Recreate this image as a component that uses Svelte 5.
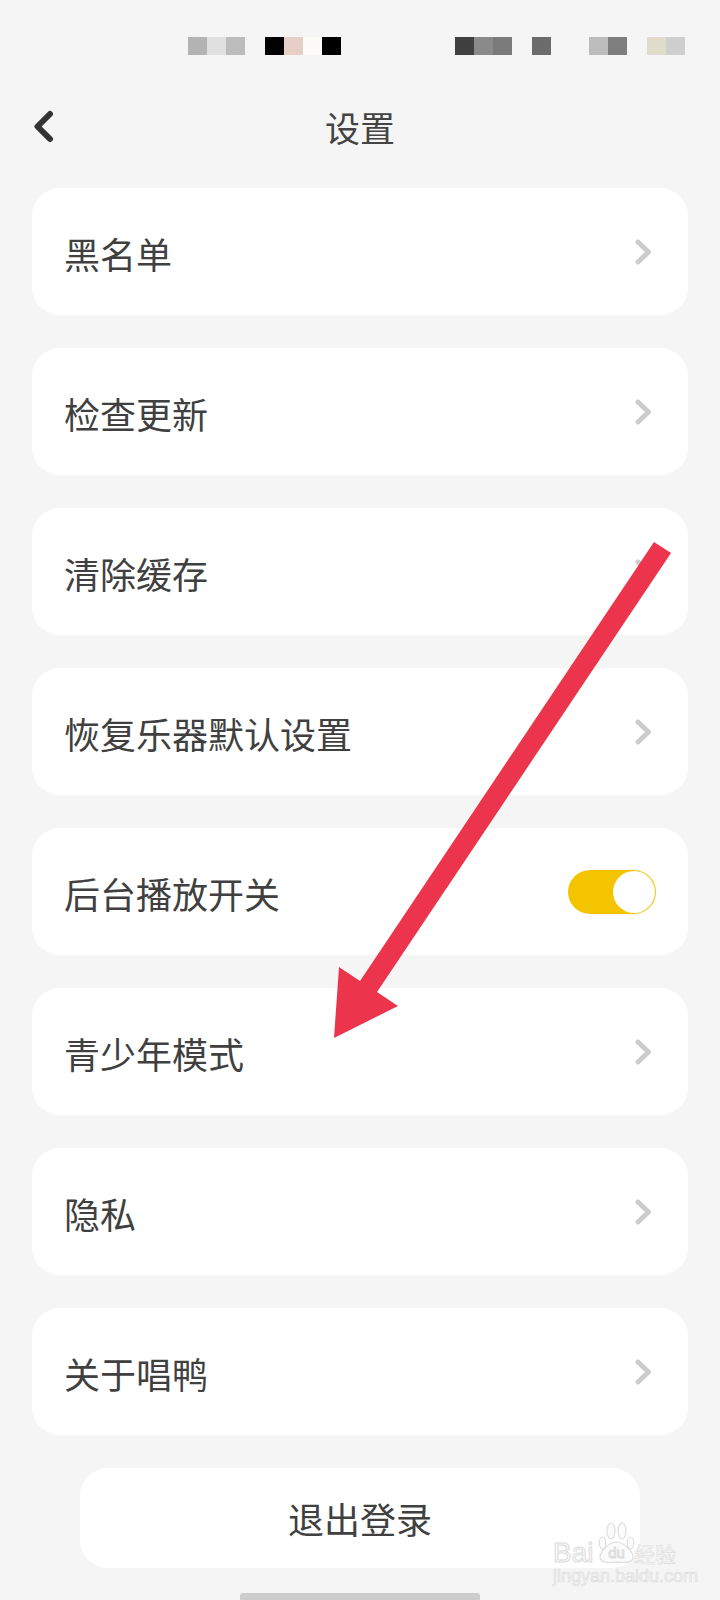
<script>
  const rows = [
    { label: '黑名单' },
    { label: '检查更新' },
    { label: '清除缓存' },
    { label: '恢复乐器默认设置' },
    { label: '后台播放开关', toggle: true },
    { label: '青少年模式' },
    { label: '隐私' },
    { label: '关于唱鸭' }
  ];

  // mosaic over the status bar, grouped as in the screenshot
  const leftGroups = [
    ['#b3b3b3', '#e0e0e0', '#bcbcbc'],
    ['#000000', '#e6cfc6', '#fdfbf8', '#000000']
  ];
  const rightGroups = [
    ['#404040', '#8a8a8a', '#7a7a7a'],
    ['#6c6c6c'],
    ['#bcbcbc', '#7e7e7e'],
    ['#e0dccb', '#cfcfcf']
  ];
</script>

<div class="page">
  <div class="status">
    <div class="status-side left">
      {#each leftGroups as group}
        <div class="blocks">
          {#each group as c}<span style="background:{c}"></span>{/each}
        </div>
      {/each}
    </div>
    <div class="status-side right">
      {#each rightGroups as group}
        <div class="blocks">
          {#each group as c}<span style="background:{c}"></span>{/each}
        </div>
      {/each}
    </div>
  </div>

  <header class="nav">
    <svg class="back" width="26" height="36" viewBox="0 0 26 36">
      <path d="M22 5 L9.5 17.5 L22 30" fill="none" stroke="#333" stroke-width="6" stroke-linecap="round" stroke-linejoin="round" />
    </svg>
    <h1>设置</h1>
  </header>

  <div class="list">
    {#each rows as row}
      <div class="row">
        <span class="label">{row.label}</span>
        {#if row.toggle}
          <div class="toggle"><div class="knob"></div></div>
        {:else}
          <svg class="chevron" width="16" height="26" viewBox="0 0 16 26">
            <path d="M3 3 L13.5 13 L3 23" fill="none" stroke="#cccccc" stroke-width="5" stroke-linecap="round" stroke-linejoin="round" />
          </svg>
        {/if}
      </div>
    {/each}
  </div>

  <button class="logout">退出登录</button>
  <div class="home-bar"></div>

  <!-- annotation arrow on top of the screenshot -->
  <svg class="arrow" width="720" height="1600" viewBox="0 0 720 1600">
    <polygon fill="#ec344c" points="654,542 671,553 377,992 398,1006 334,1038 339,967 360,981" />
  </svg>

  <div class="watermark">
    <svg class="paw" width="37" height="42" viewBox="0 0 37 42">
      <g fill="#f9f9f9" fill-opacity="0.6" stroke="#dedede" stroke-width="1.2">
        <ellipse cx="4.5" cy="21" rx="3.2" ry="6" />
        <ellipse cx="13" cy="9" rx="4" ry="8" />
        <ellipse cx="24" cy="9" rx="4" ry="8" />
        <ellipse cx="32.5" cy="21" rx="3.2" ry="6" />
        <path d="M18.5 20 C12 20 2 29 2 35 C2 41 11 41 18.5 40 C26 41 35 41 35 35 C35 29 25 20 18.5 20 Z" />
      </g>
    </svg>
    <div class="wm-brand"><span class="wm-bai">Bai</span><span class="wm-du">du</span><span class="wm-cn">经验</span></div>
    <div class="wm-url">jingyan.baidu.com</div>
  </div>
</div>

<style>
  :global(body) {
    margin: 0;
    background: #f5f5f5;
  }
  .page {
    position: relative;
    width: 720px;
    height: 1600px;
    overflow: hidden;
    box-sizing: border-box;
    background: #f5f5f5;
    font-family: "Noto Sans CJK SC", "Noto Sans", sans-serif;
    color: #404040;
  }
  .status {
    display: flex;
    justify-content: space-between;
    padding: 37px 35px 0 188px;
    height: 55px;
    box-sizing: border-box;
  }
  .status-side {
    display: flex;
    gap: 20px;
  }
  .status-side.right .blocks:nth-child(2) {
    margin-right: 18px;
  }
  .blocks {
    display: flex;
  }
  .blocks span {
    width: 19px;
    height: 18px;
  }
  .nav {
    position: relative;
    height: 72px;
    margin-top: 36px;
    display: flex;
    align-items: center;
    justify-content: center;
  }
  .nav h1 {
    margin: 0;
    font-size: 35px;
    font-weight: 400;
    line-height: 72px;
    color: #444;
  }
  .back {
    position: absolute;
    left: 28px;
    top: 18px;
  }
  .list {
    display: flex;
    flex-direction: column;
    gap: 33px;
    margin: 25px 32px 0;
  }
  .row {
    height: 127px;
    box-sizing: border-box;
    padding: 0 32px;
    background: #fff;
    border-radius: 28px;
    display: flex;
    align-items: center;
    justify-content: space-between;
    font-size: 36px;
  }
  .label {
    padding-top: 2px;
  }
  .chevron {
    margin-right: 5px;
  }
  .toggle {
    width: 88px;
    height: 44px;
    box-sizing: border-box;
    border-radius: 22px;
    background: #f5c400;
    display: flex;
    justify-content: flex-end;
    padding: 1px;
  }
  .knob {
    width: 42px;
    height: 42px;
    border-radius: 50%;
    background: #fff;
  }
  .logout {
    display: block;
    width: 560px;
    height: 100px;
    margin: 33px auto 0;
    border: 0;
    padding: 0;
    border-radius: 28px;
    background: #fff;
    font-family: inherit;
    font-size: 36px;
    color: #404040;
  }
  .home-bar {
    width: 240px;
    height: 7px;
    margin: 25px auto 0;
    border-radius: 3px 3px 0 0;
    background: #cccccc;
  }
  .arrow {
    position: absolute;
    left: 0;
    top: 0;
  }
  .watermark {
    position: absolute;
    left: 553px;
    top: 1522px;
    width: 130px;
    height: 62px;
  }
  .paw {
    position: absolute;
    left: 45px;
    top: 0;
  }
  .wm-brand {
    position: absolute;
    left: 0;
    top: 19px;
    display: flex;
    align-items: center;
    height: 24px;
    font-family: "Liberation Sans", sans-serif;
    line-height: 24px;
    color: #fafafa;
    -webkit-text-stroke: 1px #dcdcdc;
  }
  .wm-bai {
    position: relative;
    font-size: 28px;
    width: 46px;
  }
  .wm-du {
    position: relative;
    font-size: 15px;
    width: 35px;
    text-align: center;
  }
  .wm-cn {
    position: relative;
    font-family: "Noto Sans CJK SC", sans-serif;
    font-size: 21px;
    -webkit-text-stroke: 0.6px #dcdcdc;
  }
  .wm-url {
    position: absolute;
    left: 0;
    top: 46px;
    font-family: "Liberation Sans", sans-serif;
    font-size: 18px;
    line-height: 17px;
    white-space: nowrap;
    color: #f7f7f7;
    -webkit-text-stroke: 0.7px #dcdcdc;
  }
</style>
